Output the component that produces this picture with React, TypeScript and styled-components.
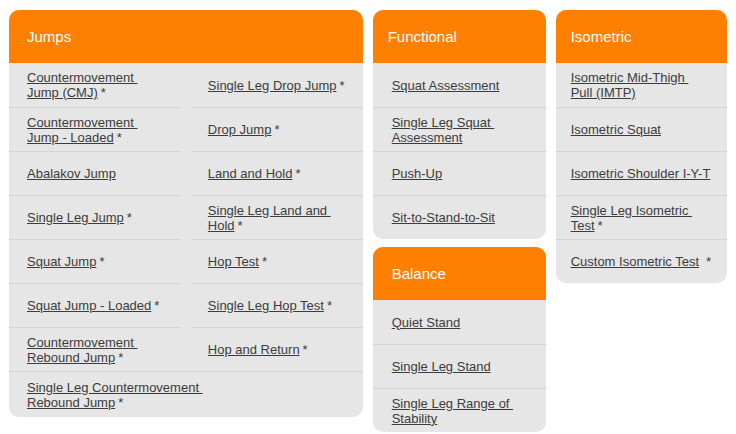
import styled, { createGlobalStyle } from 'styled-components';

type Item = { lines: string[]; star?: boolean; wide?: boolean };

const GlobalStyle = createGlobalStyle`
  body {
    margin: 0;
    background: #ffffff;
    font-family: 'Liberation Sans', Arial, sans-serif;
  }
`;

const Page = styled.div`
  display: flex;
  flex-direction: row;
  align-items: flex-start;
  gap: 10px;
  padding: 10px 9px;
`;

const Column = styled.div`
  display: flex;
  flex-direction: column;
  gap: 8px;
`;

const Card = styled.div<{ $width: number }>`
  width: ${(p) => p.$width}px;
  background: #e6e6e6;
  border-radius: 10px;
  overflow: hidden;
`;

const Header = styled.div<{ $pad: number }>`
  height: 53px;
  display: flex;
  align-items: center;
  padding-left: ${(p) => p.$pad}px;
  background: #ff7f00;
  color: #ffffff;
  font-size: 15px;
`;

const List = styled.div<{ $cols: number }>`
  display: grid;
  grid-template-columns: repeat(${(p) => p.$cols}, 1fr);
  column-gap: 10px;
`;

const Cell = styled.div<{ $pad: number; $wide?: boolean; $first: boolean }>`
  height: ${(p) => (p.$wide ? 46 : 44)}px;
  display: flex;
  align-items: center;
  padding-left: ${(p) => p.$pad}px;
  border-top: ${(p) => (p.$first ? 'none' : '1px solid #d4d4d4')};
  box-sizing: border-box;
  grid-column: ${(p) => (p.$wide ? '1 / -1' : 'auto')};
  font-size: 13px;
  line-height: 15px;
  color: #3c3c3c;
`;

const Label = styled.span`
  display: inline-block;
`;

const Link = styled.a`
  color: #3c3c3c;
  text-decoration: underline;
  white-space: pre;
  cursor: pointer;
`;

const Star = styled.span<{ $gap: number }>`
  margin-left: ${(p) => p.$gap}px;
`;

const jumps: Item[] = [
  { lines: ['Countermovement ', 'Jump (CMJ)'], star: true },
  { lines: ['Single Leg Drop Jump'], star: true },
  { lines: ['Countermovement ', 'Jump - Loaded'], star: true },
  { lines: ['Drop Jump'], star: true },
  { lines: ['Abalakov Jump'] },
  { lines: ['Land and Hold'], star: true },
  { lines: ['Single Leg Jump'], star: true },
  { lines: ['Single Leg Land and ', 'Hold'], star: true },
  { lines: ['Squat Jump'], star: true },
  { lines: ['Hop Test'], star: true },
  { lines: ['Squat Jump - Loaded'], star: true },
  { lines: ['Single Leg Hop Test'], star: true },
  { lines: ['Countermovement ', 'Rebound Jump'], star: true },
  { lines: ['Hop and Return'], star: true },
  { lines: ['Single Leg Countermovement ', 'Rebound Jump'], star: true, wide: true },
];

const functional: Item[] = [
  { lines: ['Squat Assessment'] },
  { lines: ['Single Leg Squat ', 'Assessment'] },
  { lines: ['Push-Up'] },
  { lines: ['Sit-to-Stand-to-Sit'] },
];

const balance: Item[] = [
  { lines: ['Quiet Stand'] },
  { lines: ['Single Leg Stand'] },
  { lines: ['Single Leg Range of ', 'Stability'] },
];

const isometric: Item[] = [
  { lines: ['Isometric Mid-Thigh ', 'Pull (IMTP)'] },
  { lines: ['Isometric Squat'] },
  { lines: ['Isometric Shoulder I-Y-T'] },
  { lines: ['Single Leg Isometric ', 'Test'], star: true },
  { lines: ['Custom Isometric Test'], star: true },
];

interface GroupProps {
  title: string;
  items: Item[];
  width: number;
  cols?: number;
  headerPad: number;
  itemPad: number;
  rightPad?: number;
}

const Group: React.FC<GroupProps> = ({ title, items, width, cols = 1, headerPad, itemPad, rightPad }) => (
  <Card $width={width}>
    <Header $pad={headerPad}>{title}</Header>
    <List $cols={cols}>
      {items.map((item, i) => {
        const right = cols == 2 && i % 2 == 1 && !item.wide;
        const starGap = item.lines[0] == 'Custom Isometric Test' ? 7 : 3;
        return (
          <Cell
            key={i}
            $pad={right && rightPad != null ? rightPad : itemPad}
            $wide={item.wide}
            $first={i < cols}
          >
            <Label>
              {item.lines.map((line, j) => (
                <span key={j}>
                  {j > 0 && <br />}
                  <Link>{line}</Link>
                </span>
              ))}
              {item.star && <Star $gap={starGap}>*</Star>}
            </Label>
          </Cell>
        );
      })}
    </List>
  </Card>
);

export default function App() {
  return (
    <>
      <GlobalStyle />
      <Page>
        <Group title="Jumps" items={jumps} width={355} cols={2} headerPad={18} itemPad={18} rightPad={17} />
        <Column>
          <Group title="Functional" items={functional} width={173} headerPad={15} itemPad={19} />
          <Group title="Balance" items={balance} width={173} headerPad={19} itemPad={19} />
        </Column>
        <Group title="Isometric" items={isometric} width={172} headerPad={15} itemPad={15} />
      </Page>
    </>
  );
}
